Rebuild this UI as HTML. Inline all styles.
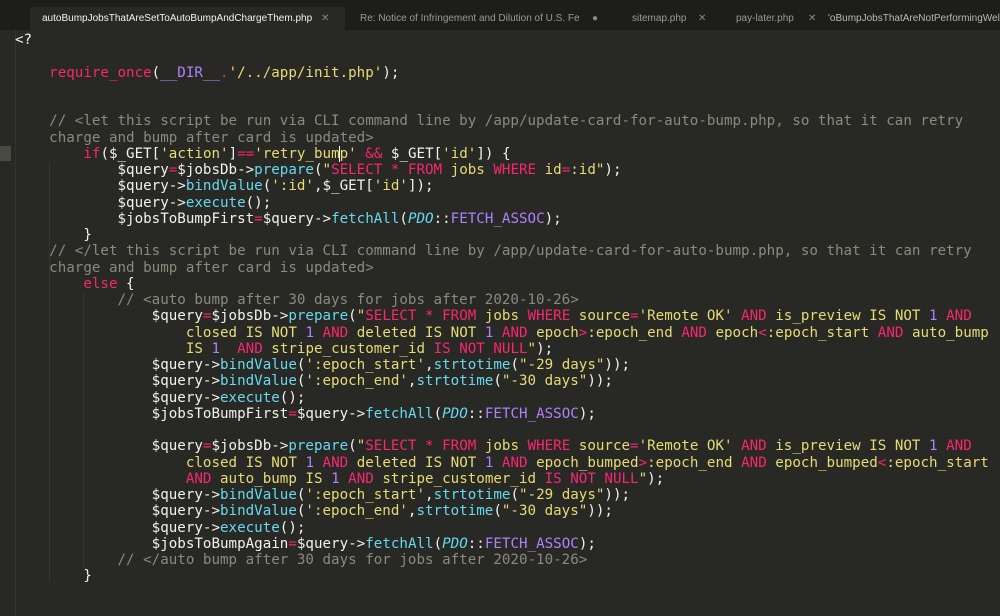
<!DOCTYPE html>
<html><head><meta charset="utf-8"><style>
html,body{margin:0;padding:0;width:1000px;height:616px;overflow:hidden;background:#282824;}
.tabs{position:absolute;left:0;top:0;width:1000px;height:30px;background:#1d1d1b;font-family:"Liberation Sans",sans-serif;font-size:10px;}
.tab{position:absolute;top:7px;height:23px;line-height:23px;color:#9a9a94;white-space:nowrap;overflow:hidden;}
.tab.act{background:#282824;color:#f2f2ee;}
.x{position:absolute;color:#8a8a84;font-size:10px}
.gut{position:absolute;left:15px;top:30px;width:1px;height:586px;background:#34342f;}
.mark{position:absolute;left:0;top:146px;width:11px;height:15px;background:#4a4a42;}
.guide{position:absolute;width:1px;background:#36362f;}
pre{position:absolute;left:15px;top:32px;margin:0;font-family:"DejaVu Sans Mono","Liberation Mono",monospace;font-size:14.19px;line-height:16.25px;color:#f2f2ec;white-space:pre;}
.k{color:#f92672}.s{color:#e6db74}.f{color:#66d9ef}.n{color:#ae81ff}.c{color:#8c8a7c}.i{color:#66d9ef;font-style:italic}
.cur{border-left:1px solid #f8f8f0;margin-left:-1px}
</style></head><body>
<div class="tabs">
<div class="tab act" style="left:30px;width:315px;padding-left:12px;box-sizing:border-box;">autoBumpJobsThatAreSetToAutoBumpAndChargeThem.php<span class="x" style="left:291px;">✕</span></div>
<div class="tab" style="left:360px;width:260px;">Re: Notice of Infringement and Dilution of U.S. Fe<span class="x" style="left:232px;">●</span></div>
<div class="tab" style="left:632px;width:90px;">sitemap.php<span class="x" style="left:66px;">✕</span></div>
<div class="tab" style="left:736px;width:90px;">pay-later.php<span class="x" style="left:72px;">✕</span></div>
<div class="tab" style="left:828px;width:172px;color:#b8b8b2;">'oBumpJobsThatAreNotPerformingWell</div>
</div>
<div class="gut"></div>
<div class="mark"></div>
<div class="guide" style="left:49px;top:162px;height:420px"></div>
<div class="guide" style="left:83px;top:292px;height:275px"></div>
<pre>&lt;?

    <span class="k">require_once</span>(<span class="n">__DIR__</span><span class="k">.</span><span class="s">'/../app/init.php'</span>);


    <span class="c">// &lt;let this script be run via CLI command line by /app/update-card-for-auto-bump.php, so that it can retry</span>
    <span class="c">charge and bump after card is updated&gt;</span>
        <span class="k">if</span>($_GET[<span class="s">'action'</span>]<span class="k">==</span><span class="s">'retry_bum<span class="cur"></span>p'</span> <span class="k">&amp;&amp;</span> $_GET[<span class="s">'id'</span>]) {
            $query<span class="k">=</span>$jobsDb-&gt;<span class="f">prepare</span>(<span class="s">"</span><span class="k">SELECT * FROM</span><span class="s"> jobs </span><span class="k">WHERE</span><span class="s"> id</span><span class="k">=</span><span class="s">:id"</span>);
            $query-&gt;<span class="f">bindValue</span>(<span class="s">':id'</span>,$_GET[<span class="s">'id'</span>]);
            $query-&gt;<span class="f">execute</span>();
            $jobsToBumpFirst<span class="k">=</span>$query-&gt;<span class="f">fetchAll</span>(<span class="i">PDO</span>::<span class="n">FETCH_ASSOC</span>);
        }
    <span class="c">// &lt;/let this script be run via CLI command line by /app/update-card-for-auto-bump.php, so that it can retry</span>
    <span class="c">charge and bump after card is updated&gt;</span>
        <span class="k">else</span> {
            <span class="c">// &lt;auto bump after 30 days for jobs after 2020-10-26&gt;</span>
                $query<span class="k">=</span>$jobsDb-&gt;<span class="f">prepare</span>(<span class="s">"</span><span class="k">SELECT * FROM</span><span class="s"> jobs </span><span class="k">WHERE</span><span class="s"> source</span><span class="k">=</span><span class="s">'Remote OK' </span><span class="k">AND</span><span class="s"> is_preview IS NOT </span><span class="n">1</span> <span class="k">AND</span>
                    <span class="s">closed IS NOT </span><span class="n">1</span> <span class="k">AND</span><span class="s"> deleted IS NOT </span><span class="n">1</span> <span class="k">AND</span><span class="s"> epoch</span><span class="k">&gt;</span><span class="s">:epoch_end </span><span class="k">AND</span><span class="s"> epoch</span><span class="k">&lt;</span><span class="s">:epoch_start </span><span class="k">AND</span><span class="s"> auto_bump</span>
                    <span class="s">IS </span><span class="n">1</span>  <span class="k">AND</span><span class="s"> stripe_customer_id </span><span class="k">IS NOT NULL</span><span class="s">"</span>);
                $query-&gt;<span class="f">bindValue</span>(<span class="s">':epoch_start'</span>,<span class="f">strtotime</span>(<span class="s">"-29 days"</span>));
                $query-&gt;<span class="f">bindValue</span>(<span class="s">':epoch_end'</span>,<span class="f">strtotime</span>(<span class="s">"-30 days"</span>));
                $query-&gt;<span class="f">execute</span>();
                $jobsToBumpFirst<span class="k">=</span>$query-&gt;<span class="f">fetchAll</span>(<span class="i">PDO</span>::<span class="n">FETCH_ASSOC</span>);

                $query<span class="k">=</span>$jobsDb-&gt;<span class="f">prepare</span>(<span class="s">"</span><span class="k">SELECT * FROM</span><span class="s"> jobs </span><span class="k">WHERE</span><span class="s"> source</span><span class="k">=</span><span class="s">'Remote OK' </span><span class="k">AND</span><span class="s"> is_preview IS NOT </span><span class="n">1</span> <span class="k">AND</span>
                    <span class="s">closed IS NOT </span><span class="n">1</span> <span class="k">AND</span><span class="s"> deleted IS NOT </span><span class="n">1</span> <span class="k">AND</span><span class="s"> epoch_bumped</span><span class="k">&gt;</span><span class="s">:epoch_end </span><span class="k">AND</span><span class="s"> epoch_bumped</span><span class="k">&lt;</span><span class="s">:epoch_start</span>
                    <span class="k">AND</span><span class="s"> auto_bump IS </span><span class="n">1</span> <span class="k">AND</span><span class="s"> stripe_customer_id </span><span class="k">IS NOT NULL</span><span class="s">"</span>);
                $query-&gt;<span class="f">bindValue</span>(<span class="s">':epoch_start'</span>,<span class="f">strtotime</span>(<span class="s">"-29 days"</span>));
                $query-&gt;<span class="f">bindValue</span>(<span class="s">':epoch_end'</span>,<span class="f">strtotime</span>(<span class="s">"-30 days"</span>));
                $query-&gt;<span class="f">execute</span>();
                $jobsToBumpAgain<span class="k">=</span>$query-&gt;<span class="f">fetchAll</span>(<span class="i">PDO</span>::<span class="n">FETCH_ASSOC</span>);
            <span class="c">// &lt;/auto bump after 30 days for jobs after 2020-10-26&gt;</span>
        }
</pre>
</body></html>
